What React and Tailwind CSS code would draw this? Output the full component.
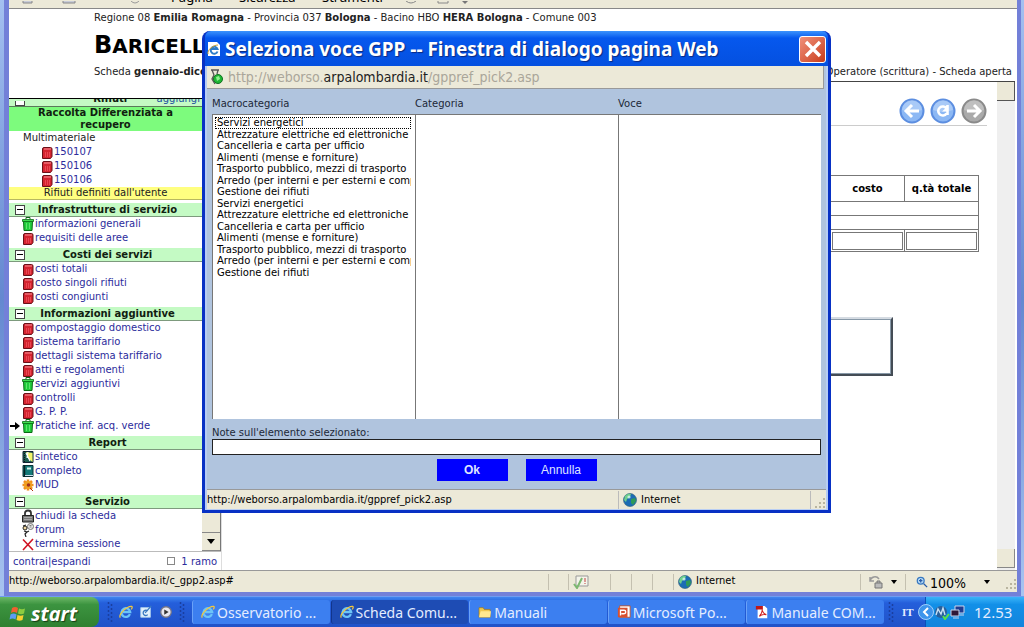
import React, { useState } from "react";

const macro = [
  "Servizi energetici",
  "Attrezzature elettriche ed elettroniche",
  "Cancelleria e carta per ufficio",
  "Alimenti (mense e forniture)",
  "Trasporto pubblico, mezzi di trasporto",
  "Arredo (per interni e per esterni e complementi)",
  "Gestione dei rifiuti",
];
const macroList = [...macro, ...macro];

const sections = [
  {
    title: "Infrastrutture di servizio",
    items: [
      { label: "informazioni generali", icon: "green" },
      { label: "requisiti delle aree", icon: "red" },
    ],
  },
  {
    title: "Costi dei servizi",
    items: [
      { label: "costi totali", icon: "red" },
      { label: "costo singoli rifiuti", icon: "red" },
      { label: "costi congiunti", icon: "red" },
    ],
  },
  {
    title: "Informazioni aggiuntive",
    items: [
      { label: "compostaggio domestico", icon: "red" },
      { label: "sistema tariffario", icon: "red" },
      { label: "dettagli sistema tariffario", icon: "red" },
      { label: "atti e regolamenti", icon: "red" },
      { label: "servizi aggiuntivi", icon: "green" },
      { label: "controlli", icon: "red" },
      { label: "G. P. P.", icon: "red" },
      { label: "Pratiche inf. acq. verde", icon: "green", current: true },
    ],
  },
  {
    title: "Report",
    items: [
      { label: "sintetico", icon: "book" },
      { label: "completo", icon: "fullbook" },
      { label: "MUD", icon: "flower" },
    ],
  },
  {
    title: "Servizio",
    items: [
      { label: "chiudi la scheda", icon: "lock" },
      { label: "forum", icon: "forum" },
      { label: "termina sessione", icon: "cross" },
    ],
  },
];

const Icon = ({ name }) => {
  const box = { viewBox: "0 0 12 14", className: "h-[14px] w-[12px] shrink-0" };
  switch (name) {
    case "green":
      return (
        <svg {...box}>
          <path d="M4 2V.5h4V2" fill="none" stroke="#0a6a14" />
          <path d="M1.5 4h9l-.5 9.500H2z" fill="#22cc3c" stroke="#0a6a14" />
          <path d="M.5 2.500h11V4.500H.5z" fill="#40dd50" stroke="#0a6a14" strokeWidth=".8" />
          <path d="M4.500 6v6M7.500 6v6" stroke="#5ce86c" />
        </svg>
      );
    case "red":
      return (
        <svg {...box}>
          <path d="M1.500 13.500V4q0-1.500 1.500-1.500h6.500q1.500 0 1.500 1.500v7.500l-1.500 2z" fill="#d42430" stroke="#6a1018" />
          <path d="M3 4h7" stroke="#f08088" strokeWidth="1.200" />
          <path d="M4.500 7v5M6.500 7v5M8.500 7v5" stroke="#f0505c" strokeWidth=".8" />
        </svg>
      );
    case "book":
      return (
        <svg {...box}>
          <path d="M1 1.500h10v11H1z" fill="#1c5c50" stroke="#123" />
          <path d="M4 2l6.500 1v9L7 9z" fill="#f4f46a" />
          <path d="M4 3l4 8M6 2l-1 6" stroke="#fff" strokeWidth="1.200" />
          <path d="M2.500 1v12" stroke="#111" strokeDasharray="1 1" />
        </svg>
      );
    case "fullbook":
      return (
        <svg {...box}>
          <path d="M1 1.500h10v11H1z" fill="#147a78" stroke="#0b3236" />
          <path d="M5 3.500h4v2H5z" fill="#d4f0e8" />
          <path d="M2.500 1v12" stroke="#062022" strokeWidth="1.500" />
          <path d="M3 11.500h8" stroke="#cde" />
        </svg>
      );
    case "flower":
      return (
        <svg {...box}>
          <path
            d="M6 1.500v11M.5 7h11M2 3l8 8M10 3l-8 8"
            stroke="#f08c1c"
            strokeWidth="2.600"
          />
          <circle cx="6" cy="7" r="4" fill="#f0a020" />
          <circle cx="6.500" cy="7" r="1.800" fill="#a0301c" />
          <path d="M8 10l3 3" stroke="#b03010" />
        </svg>
      );
    case "lock":
      return (
        <svg {...box}>
          <path d="M3 7V4q0-2.500 3-2.500T9 4v3" fill="none" stroke="#333" strokeWidth="1.800" />
          <path d="M.5 6.500h11v6.500H.5z" fill="#777" stroke="#222" />
          <path d="M2 8.500h8M2 10.500h8" stroke="#bbb" strokeWidth=".7" />
        </svg>
      );
    case "forum":
      return (
        <svg {...box}>
          <circle cx="8.500" cy="3.500" r="3" fill="#e8e8e8" stroke="#777" />
          <path d="M7.500 2.500h2M7.500 4h2" stroke="#555" strokeWidth=".7" />
          <circle cx="3" cy="5" r="2" fill="#f0d8a0" stroke="#222" />
          <path d="M1 3l3-1M2 8l3 1-2 2 1 3M5 9l2-1" fill="none" stroke="#222" strokeWidth="1.200" />
        </svg>
      );
    default:
      return (
        <svg {...box}>
          <path d="M1 2.500l10 10.500M11 2L1 13" stroke="#d01424" strokeWidth="1.600" />
        </svg>
      );
  }
};

const IeLogo = ({ className }) => (
  <svg viewBox="0 0 16 16" className={className}>
    <path
      d="M12.500 10.500A5 5 0 1 1 12.800 8H4.500"
      fill="none"
      stroke="#6cc4f8"
      strokeWidth="2.600"
    />
    <path d="M1.500 14.500C-1 11 9 1 14.500 1.500c1 .5.500 2-.5 3.500" fill="none" stroke="#f4c83c" strokeWidth="1.400" />
  </svg>
);

const Globe = () => (
  <svg viewBox="0 0 14 14" className="h-[14px] w-[14px] shrink-0">
    <circle cx="7" cy="7" r="6.500" fill="#1c6cb4" stroke="#2a5a70" strokeWidth=".6" />
    <path d="M2 3q3-3 6-2L7 4 4 6 3 9 1 7z" fill="#6fd08c" />
    <path d="M8 6l4-1 1 3-3 4-2-2z" fill="#2f9a58" />
    <circle cx="6" cy="4" r="1.600" fill="#d8f4f4" opacity=".8" />
  </svg>
);

const Grip = () => (
  <svg viewBox="0 0 12 12" className="h-3 w-3 self-end">
    <path
      d="M9 1h2v2H9zM9 5h2v2H9zM9 9h2v2H9zM5 5h2v2H5zM5 9h2v2H5zM1 9h2v2H1z"
      fill="#b9b5a0"
    />
  </svg>
);

const SectionHeader = ({ title }) => (
  <div className="mt-[3px] flex h-[14px] items-center border-b border-[#7d9a7d] bg-[#c4fac4] pl-[6px]">
    <button
      aria-label={`Chiudi ${title}`}
      className="flex h-[10px] w-[10px] shrink-0 items-center justify-center border border-[#444] bg-white"
    >
      <span className="h-px w-[6px] bg-black" />
    </button>
    <h2 className="flex-1 pr-3 text-center leading-[13px] font-bold text-[#102010]">{title}</h2>
  </div>
);

const Sidebar = () => (
  <aside className="flex w-[213px] shrink-0 flex-col border-r border-[#ddd] bg-white pt-[17px]">
    <div className="flex min-h-0 flex-1 border-t border-black">
      <nav className="min-w-0 flex-1 overflow-hidden text-[10px] leading-[14px] whitespace-nowrap text-[#2c2c9c]">
        <div className="flex h-[8px] items-end overflow-hidden border-b border-[#5a7a5a] bg-[#c4fac4] pl-[6px]">
          <span className="h-[5px] w-[10px] border border-t-0 border-[#444] bg-white" />
          <b className="flex-1 pl-[55px] text-center text-[#102010]">Rifiuti</b>
          <a href="#aggiungi" className="pr-[2px] pl-4 text-[#2050a0]">aggiungi</a>
        </div>
        <div className="bg-[#7dfb7d] text-center leading-[12px] font-bold text-[#102010]">
          Raccolta Differenziata a
          <br />
          recupero
        </div>
        <div className="pl-[14px] text-[#222]">Multimateriale</div>
        {["150107", "150106", "150106"].map((code, i) => (
          <a key={i} href="#cer" className="flex gap-px pl-[32px]">
            <Icon name="red" />
            <span>{code}</span>
          </a>
        ))}
        <div className="border-b border-[#b8b860] bg-[#ffff80] text-center leading-[12px] text-[#222]">
          Rifiuti definiti dall'utente
        </div>
        {sections.map((s) => (
          <div key={s.title}>
            <SectionHeader title={s.title} />
            {s.items.map((item) => (
              <a key={item.label} href="#voce" className="flex gap-px">
                <span className="flex w-[12px] items-center justify-center">
                  {item.current && (
                    <svg viewBox="0 0 10 8" className="h-2 w-[10px]">
                      <path d="M0 3h5V0l5 4-5 4V5H0z" fill="#000" />
                    </svg>
                  )}
                </span>
                <Icon name={item.icon} />
                <span>{item.label}</span>
              </a>
            ))}
          </div>
        ))}
      </nav>
      {/* scrollbar */}
      <div className="flex w-[19px] flex-col justify-end border-r border-[#777] bg-[#ece9d8]">
        <button
          aria-label="Scorri giù"
          className="flex h-[19px] items-center justify-center border-y border-[#888]"
        >
          <svg viewBox="0 0 8 5" className="h-[5px] w-2">
            <path d="M0 0h8L4 5z" fill="#000" />
          </svg>
        </button>
      </div>
    </div>
    <div className="flex h-[19px] shrink-0 items-center border-t border-[#bbb] pr-[4px] pl-1 text-[10px] text-[#2c2c9c]">
      <a href="#contrai">contrai</a>|<a href="#espandi">espandi</a>
      <label className="ml-auto flex items-center gap-[6px]">
        <input type="checkbox" className="h-2 w-2 appearance-none border border-[#888] bg-white" />
        1 ramo
      </label>
    </div>
  </aside>
);

const RoundButton = ({ label, color, light, children }) => (
  <button aria-label={label}>
    <svg viewBox="0 0 26 26" className="h-[26px] w-[26px]">
      <circle cx="13" cy="13" r="11.500" fill={light} stroke={color} strokeWidth="2" />
      <path d="M3 12a10 10 0 0 1 20 0q-10 4-20 0z" fill="#fff" opacity=".25" />
      {children}
    </svg>
  </button>
);

const Content = () => (
  <main className="mr-[2px] flex min-w-0 flex-1 border-t border-[#444] bg-white">
    <div className="flex min-w-0 flex-1 flex-col pt-4">
      <div className="mr-[10px] flex justify-end gap-[5px] border-b border-[#ccc] pb-px">
        <RoundButton label="Indietro" color="#5c8ee0" light="#8cb8f4">
          <path d="M20 13H8M13 7l-6 6 6 6" fill="none" stroke="#fff" strokeWidth="3" />
        </RoundButton>
        <RoundButton label="Aggiorna" color="#5c8ee0" light="#8cb8f4">
          <path d="M16.500 10.500a4.500 4.500 0 1 0 0 5M17.500 7v10" fill="none" stroke="#fff" strokeWidth="2.600" />
          <path d="M12 13.500h6V8z" fill="#fff" />
        </RoundButton>
        <RoundButton label="Avanti" color="#8a8a8a" light="#aaa">
          <path d="M6 13h12M13 7l6 6-6 6" fill="none" stroke="#fff" strokeWidth="3" />
        </RoundButton>
      </div>
      <table className="mt-[49px] mr-[18px] w-[149px] table-fixed self-end border-collapse text-[10px] [&_td]:border [&_td]:border-[#777] [&_th]:border [&_th]:border-[#777]">
        <thead>
          <tr className="h-[26px]">
            <th>costo</th>
            <th className="whitespace-nowrap">q.tà totale</th>
          </tr>
        </thead>
        <tbody>
          <tr className="h-[14px]"><td colSpan={2} /></tr>
          <tr className="h-[14px]"><td colSpan={2} /></tr>
          <tr className="h-[22px]">
            <td className="p-px">
              <input aria-label="costo" className="block h-[18px] w-full border border-[#777]" />
            </td>
            <td className="p-px">
              <input aria-label="q.tà totale" className="block h-[18px] w-full border border-[#777]" />
            </td>
          </tr>
        </tbody>
      </table>
      <div className="mt-[65px] mr-[104px] h-[59px] w-[200px] self-end border-t-2 border-r-2 border-b-2 border-t-[#d5dbe2] border-r-[#444c55] border-b-[#444c55]">
        <textarea
          aria-label="Note"
          className="block h-full w-full resize-none border border-[#8899a8] bg-white"
        />
      </div>
    </div>
    <div className="flex w-[18px] flex-col justify-between bg-[#efefef]">
      <div className="h-[19px] border-r border-b border-[#555] bg-[#ece9d8]" />
      <div className="mb-[2px] h-[19px] border-r border-b border-[#888] bg-[#ece9d8]" />
    </div>
  </main>
);

const Dialog = () => {
  const [note, setNote] = useState("");
  return (
    <section
      role="dialog"
      aria-label="Seleziona voce GPP"
      className="absolute top-[31px] left-[202px] flex h-[482px] w-[629px] flex-col rounded-t-lg border-x-3 border-b-3 border-[#0831c4] bg-[#0831c4]"
    >
      <div className="flex h-[35px] shrink-0 items-center rounded-t-md bg-linear-to-b from-[#3c92fc] via-[#0658ee] via-20% to-[#0450e0] pt-px pr-[2px] pl-[2px]">
        <svg viewBox="0 0 14 16" className="h-4 w-[14px] shrink-0">
          <path d="M1 1h9l3 3v11H1z" fill="#fff" />
          <path d="M10.500 10.500A3.500 3.500 0 1 1 10.500 8H4" fill="none" stroke="#2c7cc8" strokeWidth="2" />
          <path d="M1 13C0 9 6 4 11 4" fill="none" stroke="#c8a030" />
        </svg>
        <h1 className="min-w-0 flex-1 pl-1 font-['Noto_Sans',sans-serif] text-[19px] leading-6 font-bold whitespace-nowrap text-white [text-shadow:1px_1px_1px_#0b2a80]">
          Seleziona voce GPP -- Finestra di dialogo pagina Web
        </h1>
        <button
          aria-label="Chiudi"
          className="flex h-[27px] w-[27px] items-center justify-center rounded-[3px] border border-white bg-linear-to-br from-[#f0907a] to-[#c83a14]"
        >
          <svg viewBox="0 0 18 18" className="h-[18px] w-[18px]">
            <path d="M2 2l14 14M16 2L2 16" stroke="#fff" strokeWidth="3.400" />
          </svg>
        </button>
      </div>
      <div className="flex min-h-0 flex-1 flex-col border-x-2 border-b border-[#b7cdf3] bg-[#b0c4de]">
        <div className="mr-[2px] flex h-[23px] shrink-0 items-center border-r border-b border-[#999] bg-[#ece9d8] pl-[2px]">
          <svg viewBox="0 0 14 16" className="h-4 w-[14px] shrink-0">
            <path d="M2 1h8M3 1l2 5-2 4 3 5M9 1L8 5" fill="none" stroke="#555" strokeWidth="1.300" />
            <circle cx="9" cy="10" r="4.500" fill="#20b834" stroke="#107020" />
            <path d="M7 8l3-1 1 3-3 2z" fill="#90f090" />
          </svg>
          <p className="pl-[5px] font-['DejaVu_Sans_Condensed','DejaVu_Sans',sans-serif] text-[14px] leading-5 text-[#aaa69a]">
            http://weborso.<span className="text-[#222]">arpalombardia.it</span>/gppref_pick2.asp
          </p>
        </div>
        <div className="flex min-h-0 flex-1 flex-col px-[5px] text-[10px] leading-3 text-[#202838]">
          <div className="mt-[9px] grid min-h-0 flex-1 grid-cols-3">
            <div className="flex flex-col gap-1">
              <label htmlFor="macro">Macrocategoria</label>
              <select
                id="macro"
                size={14}
                className="w-full min-h-0 flex-1 appearance-none overflow-hidden border-t border-l border-[#777] bg-white py-[2px] pr-1 pl-[2px] text-black"
              >
                {macroList.map((m, i) => (
                  <option
                    key={i}
                    className="h-[12px] min-h-0 overflow-hidden p-0 pl-[2px] leading-[11px] outline-dotted outline-0 -outline-offset-1 outline-black first:outline-1 even:h-[11px]"
                  >
                    {m}
                  </option>
                ))}
              </select>
            </div>
            <div className="flex flex-col gap-1">
              <label htmlFor="cat">Categoria</label>
              <select id="cat" size={14} className="w-full min-h-0 flex-1 appearance-none border-t border-l border-[#777] bg-white" />
            </div>
            <div className="flex flex-col gap-1">
              <label htmlFor="voce">Voce</label>
              <select id="voce" size={14} className="w-full min-h-0 flex-1 appearance-none border-t border-l border-[#777] bg-white" />
            </div>
          </div>
          <label htmlFor="note" className="mt-2">Note sull'elemento selezionato:</label>
          <input
            id="note"
            value={note}
            onChange={(e) => setNote(e.target.value)}
            className="h-4 w-full shrink-0 border border-[#222] bg-white px-1"
          />
          <div className="mt-1 mb-[8px] flex justify-center gap-[18px] font-['Liberation_Sans',sans-serif] text-[12px] text-[#dfe4ff]">
            <button className="h-[22px] w-[71px] bg-[#0000ff] font-bold">Ok</button>
            <button className="h-[22px] w-[71px] bg-[#0000ff]">Annulla</button>
          </div>
        </div>
        <div className="flex h-[20px] shrink-0 items-center border-t border-[#999] bg-[#ece9d8] pt-px font-['DejaVu_Sans_Condensed','DejaVu_Sans',sans-serif] text-[11px] text-black">
          <span className="w-[411px]">http://weborso.arpalombardia.it/gppref_pick2.asp</span>
          <span className="flex h-full flex-1 items-center gap-1 border-l border-[#bbb] pl-1">
            <Globe />
            Internet
          </span>
          <span className="flex h-full w-[16px] justify-end border-l border-[#bbb]">
            <Grip />
          </span>
        </div>
      </div>
    </section>
  );
};

const tasks = [
  { label: "Osservatorio ...", icon: "ie" },
  { label: "Scheda Comu...", icon: "ie", active: true },
  { label: "Manuali", icon: "folder" },
  { label: "Microsoft Po...", icon: "ppt" },
  { label: "Manuale COM...", icon: "pdf" },
];

const TaskIcon = ({ name }) => {
  if (name === "ie") return <IeLogo className="h-[14px] w-[14px] shrink-0" />;
  if (name === "folder")
    return (
      <svg viewBox="0 0 16 14" className="h-3 w-[14px] shrink-0">
        <path d="M1 2h5l1 2h7v9H1z" fill="#f0c850" stroke="#a07818" strokeWidth=".8" />
        <path d="M3 6h12l-1 7H1z" fill="#ffe890" />
      </svg>
    );
  if (name === "ppt")
    return (
      <svg viewBox="0 0 16 16" className="h-[14px] w-[14px] shrink-0">
        <path d="M3 1h12v13H3z" fill="#fff" stroke="#c85020" />
        <path d="M1 3h11v11H1z" fill="#d85030" />
        <path d="M4 12V6h4q2 0 2 2t-2 2H5" fill="none" stroke="#fff" strokeWidth="1.500" />
      </svg>
    );
  return (
    <svg viewBox="0 0 16 16" className="h-[14px] w-[14px] shrink-0">
      <path d="M3 1h8l3 3v11H3z" fill="#fff" />
      <path d="M1 1h8v4H1z" fill="#c01818" />
      <path d="M5 13q4-5 3-8 1 5 5 6-5-1-8 2z" fill="none" stroke="#d02020" strokeWidth="1.200" />
    </svg>
  );
};

const Handle = () => (
  <svg viewBox="0 0 6 22" className="h-[22px] w-[6px] shrink-0">
    <path d="M1.500 1v20M4.500 3v18" stroke="#1a3fa0" strokeWidth="1.500" strokeDasharray="2 2" />
  </svg>
);

const Taskbar = () => (
  <footer className="flex h-[31px] shrink-0 items-stretch border-t border-[#6f9cf0] bg-linear-to-b from-[#3f84f0] via-[#245edb] via-20% to-[#2052c8] font-['Noto_Sans',sans-serif] text-[14px] text-[#e4edff]">
    <button className="flex w-[99px] shrink-0 items-center gap-1 rounded-r-lg bg-linear-to-b from-[#6cb868] via-[#3c9440] via-25% to-[#2f8030] pt-1 pl-[9px]">
      <svg viewBox="0 0 18 18" className="h-[18px] w-[18px]">
        <path d="M3 3q3-2 6 0L8 8Q5 6 2 8z" fill="#f06030" />
        <path d="M10 3.500q3 1.500 6 0L15 8.500q-3 1.500-6 0z" fill="#8ccc40" />
        <path d="M1.500 9.500q3-2 6 0l-1 5q-3-2-6 0z" fill="#5c9cf4" />
        <path d="M8.500 10q3 1.500 6 0l-1 5q-3 1.500-6 0z" fill="#f8d030" />
      </svg>
      <span className="font-['Open_Sans',sans-serif] text-[20px] leading-6 font-bold text-white italic [text-shadow:1px_1px_1px_#143c14]">
        start
      </span>
    </button>
    <div className="flex w-[93px] shrink-0 items-center gap-[6px] pl-2">
      <Handle />
      <IeLogo className="h-[14px] w-[14px]" />
      <svg viewBox="0 0 16 16" className="h-[14px] w-[14px]">
        <path d="M2 3h11v11H2z" fill="#e4f2fc" stroke="#a8ccec" />
        <path d="M10 7a3 3 0 1 0 0 4M7 9l7-8" fill="none" stroke="#3878c0" strokeWidth="1.500" />
      </svg>
      <svg viewBox="0 0 16 16" className="h-[14px] w-[14px]">
        <circle cx="8" cy="8" r="6" fill="#e8e8f0" stroke="#778" strokeWidth="1.500" />
        <path d="M6 5l5 3-5 3z" fill="#333" />
      </svg>
      <Handle />
    </div>
    <div className="flex min-w-0 flex-1 gap-px py-[3px]">
      {tasks.map((t) => (
        <button
          key={t.label}
          className={
            "flex min-w-0 flex-1 items-center gap-[2px] overflow-hidden rounded-[3px] border-l pl-2 whitespace-nowrap " +
            (t.active ? "border-[#12358c] bg-[#1e4cb4]" : "border-[#6aa2f8] bg-[#3c7ff0]")
          }
        >
          <TaskIcon name={t.icon} />
          {t.label}
        </button>
      ))}
    </div>
    <div className="flex w-[41px] shrink-0 items-center gap-2 pl-1">
      <Handle />
      <span className="font-['Liberation_Serif',serif] text-[11px] font-bold">IT</span>
    </div>
    <div className="flex w-[99px] shrink-0 items-center border-l border-[#0c50b8] bg-linear-to-b from-[#38b4f8] via-[#1290e8] via-25% to-[#1284dc]">
      <svg viewBox="0 0 16 16" className="-ml-2 h-4 w-4">
        <circle cx="8" cy="8" r="7.500" fill="#3c94ec" stroke="#a0d0fc" />
        <path d="M10 4L6 8l4 4" fill="none" stroke="#fff" strokeWidth="2" />
      </svg>
      <svg viewBox="0 0 16 16" className="h-4 w-4">
        <circle cx="7" cy="8" r="6" fill="#28609c" />
        <path d="M2 11l2-6 3 5 2-6 2 7" fill="none" stroke="#c8e0f4" strokeWidth="1.400" />
        <path d="M9 12l2 3 4-5" fill="none" stroke="#58e048" strokeWidth="2" />
      </svg>
      <svg viewBox="0 0 16 16" className="h-4 w-4">
        <path d="M5 2h9v7H5z" fill="#203c90" stroke="#c8d4ec" />
        <path d="M1 6h8v6H1z" fill="#301838" stroke="#c8d4ec" />
        <path d="M3 14h6M10 11h4" stroke="#c8d4ec" />
      </svg>
      <time className="pl-2 text-[15px]">12.53</time>
    </div>
  </footer>
);

export default function App() {
  return (
    <div className="relative flex h-screen flex-col overflow-hidden bg-[#5b7fd0] font-['DejaVu_Sans',Verdana,sans-serif] text-black">
      <div className="flex min-h-0 flex-1 bg-linear-to-b from-[#a4c0f0] via-[#6488d0] to-[#a8c4f0] pr-[3px] pl-[4px]">
        <div className="flex min-w-0 flex-1 flex-col border-r-4 border-b-4 border-l-5 border-[#7380d8] bg-white">
          {/* bottom edge of the command bar */}
          <div className="flex h-[9px] shrink-0 items-end overflow-hidden border-b border-[#888] bg-[#ece9d8] pb-[3px] pl-[12px] font-['Noto_Sans',sans-serif] text-[13px] leading-4">
            <svg viewBox="0 0 150 4" className="h-1 w-[150px] shrink-0">
              <path d="M2 0v2h9V0M42 0v2h12V0" fill="#c8ccd8" stroke="#888" />
              <path d="M110 0q4 4 8 0" fill="none" stroke="#999" />
            </svg>
            <span className="w-[68px]">Pagina</span>
            <span className="w-[83px]">Sicurezza</span>
            <span className="w-[80px]">Strumenti</span>
            <svg viewBox="0 0 70 4" className="h-1 w-[70px] shrink-0">
              <path d="M4 0q5 4 10 0M36 0v2h10V0" fill="none" stroke="#888" />
              <path d="M60 0h6l-3 3z" fill="#777" />
            </svg>
          </div>
          <div className="flex min-h-0 flex-1 flex-col">
            <header className="h-[72px] shrink-0 pr-[5px] pl-[85px] text-[10px] leading-[14px] text-[#222]">
              <p className="pt-[2px]">
                Regione 08 <b>Emilia Romagna</b> - Provincia 037 <b>Bologna</b> - Bacino HBO{" "}
                <b>HERA Bologna</b> - Comune 003
              </p>
              <h1 className="pt-[6px] text-[20px] leading-[28px] font-bold text-black">
                <span className="text-[24px]">B</span>ARICELLA
              </h1>
              <p className="flex justify-between pt-[5px]">
                <span>
                  Scheda <b>gennaio-dicembre</b>
                </span>
                <span>Operatore (scrittura) - Scheda aperta</span>
              </p>
            </header>
            <div className="flex min-h-0 flex-1">
              <Sidebar />
              <Content />
            </div>
          </div>
          <div className="flex h-[22px] shrink-0 items-center border-t border-[#999] bg-[#ece9d8] font-['DejaVu_Sans_Condensed','DejaVu_Sans',sans-serif] text-[11px] [&>span]:flex [&>span]:h-4 [&>span]:items-center [&>span+span]:border-l [&>span+span]:border-[#c4c0b0]">
            <span className="min-w-0 flex-1">http://weborso.arpalombardia.it/c_gpp2.asp#</span>
            <span className="w-[20px]" />
            <span className="w-[42px] pl-1">
              <svg viewBox="0 0 16 14" className="h-[14px] w-4">
                <path d="M3 1h12v10H3z" fill="#f4f4ea" stroke="#999" />
                <path d="M12 3v4M12 8v1" stroke="#c04040" />
                <path d="M1 9l3 4 5-10" fill="none" stroke="#7cb870" strokeWidth="2" />
              </svg>
            </span>
            <span className="w-[21px]" />
            <span className="w-[21px]" />
            <span className="w-[21px]" />
            <span className="w-[187px] gap-1 pl-1">
              <Globe />
              Internet
            </span>
            <span className="w-[45px] gap-2 pl-2">
              <svg viewBox="0 0 14 14" className="h-[14px] w-[14px]">
                <path d="M1 6a5 5 0 0 1 9-2M1 2v4h4" fill="none" stroke="#999" strokeWidth="1.500" />
                <path d="M6 8h7v5H6zM8 8V6h3v2" fill="#bbb" stroke="#777" />
              </svg>
              <svg viewBox="0 0 6 4" className="h-1 w-[6px]"><path d="M0 0h6L3 4z" /></svg>
            </span>
            <span className="w-[112px] gap-[2px] pl-[10px] text-[14px]">
              <svg viewBox="0 0 14 14" className="h-3 w-3">
                <circle cx="5.500" cy="5.500" r="4" fill="#b8dcf8" stroke="#3878c0" strokeWidth="1.500" />
                <path d="M3.500 5.500h4M5.500 3.500v4M9 9l4 4" stroke="#285ca8" strokeWidth="1.500" />
              </svg>
              <span className="pt-1">100%</span>
              <svg viewBox="0 0 6 4" className="ml-4 h-1 w-[6px]"><path d="M0 0h6L3 4z" /></svg>
              <span className="ml-auto flex self-end">
                <Grip />
              </span>
            </span>
          </div>
        </div>
      </div>
      <Taskbar />
      <Dialog />
    </div>
  );
}
